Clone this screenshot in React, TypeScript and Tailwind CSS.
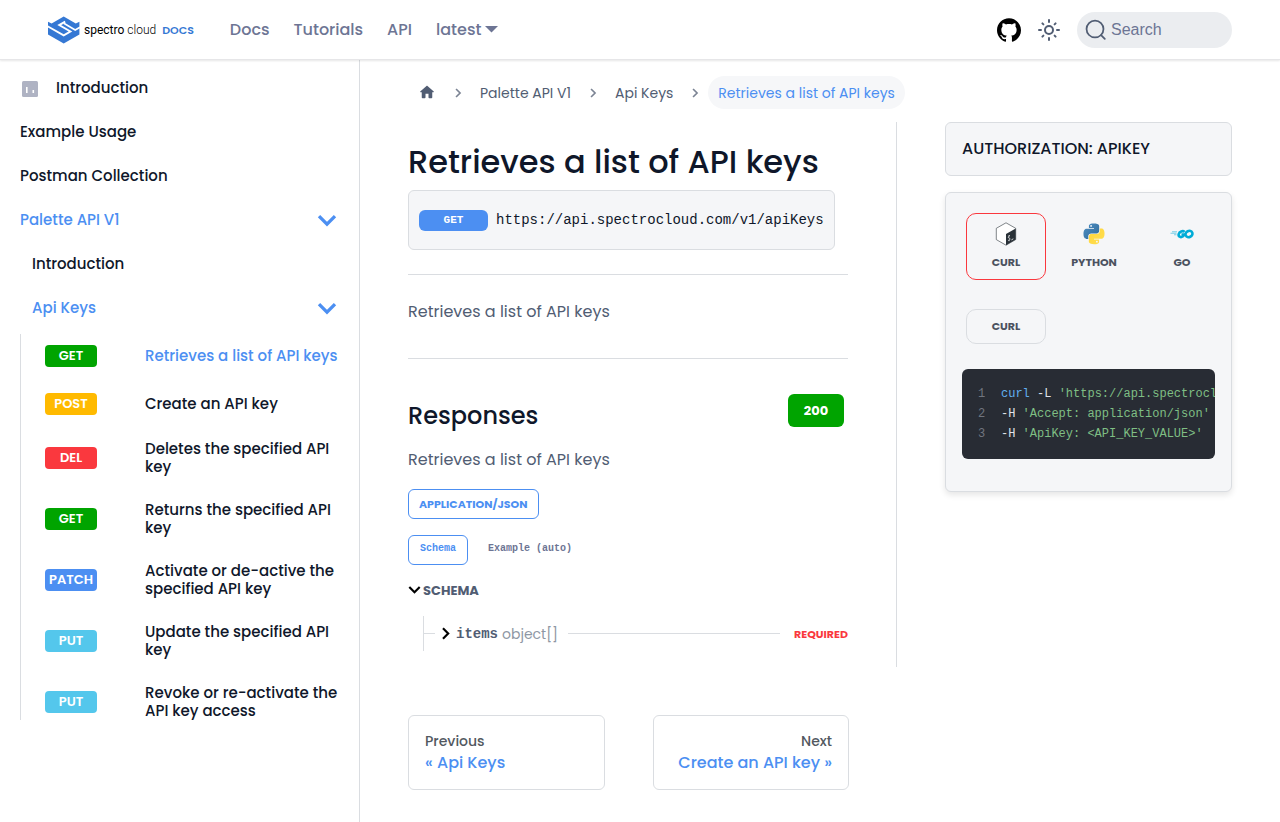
import React from "react";

const BORDER = "border-[#dadde1]";
const mono = "font-['Liberation_Mono',monospace]";

function Logo() {
  return (
    <a href="#home" className="flex items-center" aria-label="Spectro Cloud docs">
      <svg width="32" height="28" viewBox="0 0 32 28" aria-hidden="true">
        <path fill="#3578d4" d="M0 5.800 3.600 7.400 15.700.4 27.800 7.400 31.400 5.800V18.600L15.700 27.500 0 18.600z" />
        <path fill="none" stroke="#fff" strokeWidth="1.900" d="M-.5 10.200 15.700 19.300 22.400 15.500 11.200 9.100 17.200 5.600" />
        <path fill="none" stroke="#fff" strokeWidth="1.700" d="M32 11.200 27.200 14 15.800 7.300" />
      </svg>
      <span className="ml-1 whitespace-nowrap font-['Roboto',sans-serif] text-xs text-black">spectro <span className="font-light">cloud</span></span>
      <span className="ml-1.5 text-[11px] font-semibold leading-5 text-[#3578d4]">DOCS</span>
    </a>
  );
}

function Chevron({ size, stroke = 3, dir = "down" }: { size: number; stroke?: number; dir?: "down" | "right" }) {
  return (
    <svg width={size} height={size} viewBox="3 3 18 18" fill="none" stroke="currentColor" strokeWidth={stroke} className="shrink-0" aria-hidden="true">
      <path d={dir === "down" ? "M4.800 8.500 12 15.700l7.200-7.200" : "m8.500 4.800 7.200 7.200-7.200 7.200"} />
    </svg>
  );
}

function Header() {
  return (
    <header className="relative z-10 flex h-[60px] items-center border-b border-[#e6e6e8] bg-white px-12 shadow-[0_1px_2px_rgba(0,0,0,0.1)]">
      <Logo />
      <nav className="ml-9 flex items-center gap-6 text-base font-medium text-[#6d7594]">
        <a href="#docs">Docs</a>
        <a href="#tutorials">Tutorials</a>
        <a href="#api">API</a>
        <button className="flex items-center gap-1">
          latest
          <svg width="13" height="7" viewBox="0 0 13 7" aria-hidden="true"><path fill="currentColor" d="M0 0h13L6.500 6.500z" /></svg>
        </button>
      </nav>
      <div className="ml-auto flex items-center gap-4">
        <a href="#github" aria-label="GitHub">
          <svg width="24" height="24" viewBox="0 0 24 24" aria-hidden="true">
            <path d="M12 .297c-6.630 0-12 5.373-12 12 0 5.303 3.438 9.800 8.205 11.385.6.113.82-.258.82-.577 0-.285-.01-1.040-.015-2.040-3.338.724-4.042-1.610-4.042-1.610C4.422 18.070 3.633 17.700 3.633 17.700c-1.087-.744.084-.729.084-.729 1.205.084 1.838 1.236 1.838 1.236 1.070 1.835 2.809 1.305 3.495.998.108-.776.417-1.305.760-1.605-2.665-.3-5.466-1.332-5.466-5.930 0-1.310.465-2.380 1.235-3.220-.135-.303-.540-1.523.105-3.176 0 0 1.005-.322 3.300 1.230.960-.267 1.980-.399 3-.405 1.020.006 2.040.138 3 .405 2.280-1.552 3.285-1.230 3.285-1.230.645 1.653.240 2.873.120 3.176.765.840 1.230 1.910 1.230 3.220 0 4.610-2.805 5.625-5.475 5.920.420.360.810 1.096.810 2.220 0 1.606-.015 2.896-.015 3.286 0 .315.210.690.825.570C20.565 22.092 24 17.592 24 12.297c0-6.627-5.373-12-12-12" />
          </svg>
        </a>
        <button aria-label="Switch theme" className="text-[#515d73]">
          <svg width="24" height="24" viewBox="0 0 24 24" fill="none" stroke="currentColor" strokeWidth="2" strokeLinecap="round" aria-hidden="true">
            <circle cx="12" cy="12" r="4" />
            <path d="M12 2v2M12 20v2M2 12h2M20 12h2M5.400 5.400l1 1M17.600 17.600l1 1M5.400 18.600l1-1M17.600 6.400l1-1" />
          </svg>
        </button>
        <label className="flex h-9 w-[155px] items-center gap-1 rounded-full bg-[#ebedf0] px-2 text-[#515d73]">
          <svg width="22" height="22" viewBox="0 0 20 20" fill="none" stroke="currentColor" strokeWidth="1.600" strokeLinecap="round" className="shrink-0" aria-hidden="true">
            <path d="m14.400 14.400 3.600 3.600M16.800 9.100A7.700 7.700 0 1 1 1.400 9.100a7.700 7.700 0 0 1 15.400 0Z" />
          </svg>
          <input aria-label="Search" placeholder="Search" className="w-full min-w-0 bg-transparent font-['Liberation_Sans',sans-serif] text-base outline-none placeholder:text-[#6d7594]" />
        </label>
      </div>
    </header>
  );
}

const endpoints = [
  { method: "GET", color: "bg-[#00a400]", label: "Retrieves a list of API keys", active: true },
  { method: "POST", color: "bg-[#ffba00]", label: "Create an API key" },
  { method: "DEL", color: "bg-[#fa383e]", label: "Deletes the specified API key" },
  { method: "GET", color: "bg-[#00a400]", label: "Returns the specified API key" },
  { method: "PATCH", color: "bg-[#4c8ff2]", label: "Activate or de-active the specified API key" },
  { method: "PUT", color: "bg-[#54c7ec]", label: "Update the specified API key" },
  { method: "PUT", color: "bg-[#54c7ec]", label: "Revoke or re-activate the API key access" },
];

function Sidebar() {
  return (
    <aside className={`w-[360px] shrink-0 border-r px-5 pt-1.5 text-[15px] font-medium text-[#0f172a] ${BORDER}`}>
      <a href="#intro" className="flex h-11 items-center gap-4">
        <svg width="20" height="20" viewBox="0 0 20 20" aria-hidden="true">
          <rect x="2" y="3" width="16" height="16" rx="1.500" fill="#afb3c3" />
          <path d="M6.800 9v6M13.300 12v3" stroke="#fff" strokeWidth="1.600" />
        </svg>
        Introduction
      </a>
      <a href="#usage" className="flex h-11 items-center">Example Usage</a>
      <a href="#postman" className="flex h-11 items-center">Postman Collection</a>
      <button className="flex h-11 w-full items-center justify-between pr-0.5 text-[#4c8ff2]">Palette API V1<Chevron size={20} /></button>
      <a href="#api-intro" className="flex h-11 items-center pl-3">Introduction</a>
      <button className="flex h-11 w-full items-center justify-between pl-3 pr-0.5 text-[#4c8ff2]">Api Keys<Chevron size={20} /></button>
      <ul className={`mt-1 flex flex-col gap-[25px] border-l pl-6 pt-2.5 ${BORDER}`}>
        {endpoints.map((e) => (
          <li key={e.label}>
            <a href="#endpoint" className={`flex min-h-[23px] items-center ${e.active ? "text-[#4c8ff2]" : ""}`}>
              <span className={`flex h-[22px] w-[52px] shrink-0 items-center justify-center rounded text-[13px] font-semibold text-white ${e.color}`}>{e.method}</span>
              <span className="ml-12 w-[195px] shrink-0 leading-[18px]">{e.label}</span>
            </a>
          </li>
        ))}
      </ul>
    </aside>
  );
}

function Breadcrumbs() {
  const sep = <span className="text-[#7c8494]"><Chevron size={10} dir="right" /></span>;
  return (
    <nav aria-label="Breadcrumbs" className="flex h-[33px] items-center text-sm text-[#515d73]">
      <a href="#home" aria-label="Home" className="ml-2.5 mr-[17px]">
        <svg width="18" height="18" viewBox="0 0 24 24" aria-hidden="true"><path fill="currentColor" d="M10 18v-5h4v5c0 .55.45 1 1 1h3c.55 0 1-.45 1-1v-7h1.700c.46 0 .68-.57.33-.87L12.670 2.600c-.38-.34-.96-.34-1.340 0l-8.360 7.530c-.34.300-.13.870.33.870H5v7c0 .55.45 1 1 1h3c.55 0 1-.45 1-1z" /></svg>
      </a>
      {sep}
      <a href="#palette" className="mx-[17px]">Palette API V1</a>
      {sep}
      <a href="#keys" className="mx-[17px]">Api Keys</a>
      {sep}
      <span className="ml-2 flex h-[33px] items-center rounded-full bg-[#f6f7f9] px-2.5 text-[#4c8ff2]">Retrieves a list of API keys</span>
    </nav>
  );
}

function Article() {
  return (
    <article className="text-base leading-[26px] text-[#515d73]">
      <h1 className="pt-5 text-[32px] font-medium leading-10 text-[#0f172a]">Retrieves a list of API keys</h1>
      <div className={`mt-2 flex h-[60px] w-fit items-center gap-2 rounded-md border bg-[#f5f6f8] px-2.5 ${BORDER} ${mono}`}>
        <span className="flex h-[21px] w-[69px] items-center justify-center rounded-md bg-[#4c8ff2] text-[11px] font-bold text-white">GET</span>
        <code className={`text-sm text-[#0f172a] ${mono}`}>https://api.spectrocloud.com/v1/apiKeys</code>
      </div>
      <hr className={`mt-6 ${BORDER}`} />
      <p className="mt-6">Retrieves a list of API keys</p>
      <hr className={`mt-[33px] ${BORDER}`} />
      <div className="mt-[35px] flex items-start justify-between pr-1">
        <h2 className="pt-1.5 text-2xl font-medium leading-8 text-[#0f172a]">Responses</h2>
        <button className="h-[33px] w-14 rounded-md bg-[#00a400] text-[13px] font-bold text-white">200</button>
      </div>
      <p className="mt-[15px]">Retrieves a list of API keys</p>
      <button className="mt-4 flex h-[30px] items-center rounded-md border border-[#4c8ff2] px-2.5 text-[11px] font-bold text-[#4c8ff2]">APPLICATION/JSON</button>
      <div className={`mt-4 flex h-[30px] text-[10px] font-bold leading-4 ${mono}`}>
        <button className="flex rounded-md border border-[#4c8ff2] px-[11px] pt-[5px] text-[#4c8ff2]">Schema</button>
        <button className="ml-5 flex pt-1.5 text-[#6d7594]">Example (auto)</button>
      </div>
      <button className="mt-[13px] flex items-center gap-0.5 text-[13px] font-bold leading-[26px]">
        <span className="pb-1 text-black"><Chevron size={13} /></span>SCHEMA
      </button>
      <div className={`ml-[15px] mt-3 flex h-[35px] items-center border-l ${BORDER}`}>
        <span className={`w-[11px] border-t ${BORDER}`} />
        <button className="ml-1 flex items-center whitespace-nowrap text-sm">
          <span className="text-black"><Chevron size={13} dir="right" /></span>
          <strong className={`ml-1 ${mono}`}>items</strong>
          <span className="ml-1 text-[#8e97a4]">object[]</span>
        </button>
        <span className={`ml-2.5 mr-3.5 flex-1 border-t ${BORDER}`} />
        <span className="text-[11px] font-bold text-[#fa383e]">REQUIRED</span>
      </div>
    </article>
  );
}

function BashIcon() {
  return (
    <svg width="24" height="24" viewBox="0 0 24 24" aria-hidden="true">
      <path fill="#fff" stroke="#4b5157" strokeWidth=".7" d="M12 .8 21.700 6.300v11.300L12 23.200 2.300 17.600V6.300z" />
      <path fill="#293138" d="m12 12 9.700-5.600v11.200L12 23.200z" />
      <path fill="none" stroke="#fff" strokeWidth=".8" d="M16 13.900c-1.100-.2-2.200 1.200-1.500 1.900.6.600 1.800.2 1.500 1.300-.3.900-1.200 1.500-1.900 1.100M15.100 13v1M15.100 18.200v1M17.400 17.900l1.900-1.100" />
    </svg>
  );
}

function PythonIcon() {
  return (
    <svg width="24" height="24" viewBox="4 4 120 120" aria-hidden="true">
      <defs>
        <linearGradient id="python-blue" x1="0" y1="0" x2="1" y2="1"><stop stopColor="#4d8fc4" /><stop offset="1" stopColor="#306998" /></linearGradient>
        <linearGradient id="python-yellow" x1="0" y1="0" x2="1" y2="1"><stop stopColor="#ffd43b" /><stop offset="1" stopColor="#ffe052" /></linearGradient>
      </defs>
      <path fill="url(#python-blue)" d="M63.400 11C37 11 38.600 22.500 38.600 22.500v12H64V38H28.500S11.300 36 11.300 63.200c0 27.100 15 26.100 15 26.100h9V76.700s-.5-15 14.800-15h25.400s14.300.2 14.300-13.900V24.700S92 11 63.400 11zM49.500 19a4.600 4.600 0 1 1 0 9.200 4.600 4.600 0 0 1 0-9.200z" />
      <path fill="url(#python-yellow)" d="M64.600 115c26.400 0 24.800-11.500 24.800-11.500v-12H64V88h35.500s17.200 2 17.200-25.200c0-27.100-15-26.100-15-26.100h-9v12.600s.5 15-14.800 15H52.500s-14.300-.2-14.300 13.900v23.100S36 115 64.600 115zm13.900-8a4.600 4.600 0 1 1 0-9.200 4.600 4.600 0 0 1 0 9.200z" />
    </svg>
  );
}

function GoIcon() {
  return (
    <svg width="24" height="24" viewBox="0 0 24 24" fill="none" stroke="#00acd7" aria-hidden="true">
      <path strokeWidth="1.100" opacity=".5" d="M2 9.800h5M.5 11.300h6M4 12.800h2.500" />
      <path strokeWidth="2.600" d="M14.600 9.900c-1.800-1.600-5.200-.4-5.900 2.100-.6 2.600 2 3.800 4.100 2.500.8-.5 1.200-1.100 1.300-1.900h-2.600" />
      <ellipse cx="19" cy="12" rx="3.500" ry="3" strokeWidth="2.600" transform="rotate(-25 19 12)" />
    </svg>
  );
}

const languages = [
  { name: "CURL", icon: <BashIcon />, frame: "border-[#fa383e]" },
  { name: "PYTHON", icon: <PythonIcon />, frame: "border-transparent" },
  { name: "GO", icon: <GoIcon />, frame: "border-transparent" },
];

const code = [
  <><span className="text-[#61afef]">curl</span> -L <span className="text-[#7fbf84]">'https://api.spectrocloud.com/v1/apiKeys'</span></>,
  <>-H <span className="text-[#7fbf84]">'Accept: application/json'</span></>,
  <>-H <span className="text-[#7fbf84]">'ApiKey: &lt;API_KEY_VALUE&gt;'</span></>,
];

function RequestPanel() {
  return (
    <div className="flex min-w-0 flex-col gap-4">
      <button className={`flex h-[54px] items-center rounded-md border bg-[#f5f6f8] px-4 text-base font-medium text-[#0f172a] ${BORDER}`}>AUTHORIZATION: APIKEY</button>
      <section className={`rounded-md border bg-[#f5f6f8] px-4 pb-8 pt-5 shadow-[0_3px_6px_rgba(0,0,0,0.1)] ${BORDER}`}>
        <div className="flex gap-2 overflow-hidden pl-1 text-[11px] font-bold text-[#4b5260]">
          {languages.map((l) => (
            <button key={l.name} className={`flex h-[67px] w-20 shrink-0 flex-col items-center rounded-[10px] border pt-2 ${l.frame}`}>
              {l.icon}
              <span className="mt-2 leading-4">{l.name}</span>
            </button>
          ))}
        </div>
        <button className={`ml-1 mt-[29px] h-[35px] w-20 rounded-[10px] border text-[11px] font-bold text-[#4b5260] ${BORDER}`}>CURL</button>
        <pre className={`mt-[25px] h-[90px] overflow-x-auto overflow-y-hidden rounded-md bg-[#282c34] px-4 py-[15px] text-xs leading-5 text-[#dfe3ea] [scrollbar-width:none] ${mono}`}>
          {code.map((line, i) => (
            <div key={i} className="flex"><span className="w-[23px] shrink-0 text-[#70757f]">{i + 1}</span><code className={mono}>{line}</code></div>
          ))}
        </pre>
      </section>
    </div>
  );
}

export default function App() {
  return (
    <div className="flex min-h-screen flex-col bg-white font-['Poppins','Inter',sans-serif]">
      <Header />
      <div className="flex flex-1">
        <Sidebar />
        <main className="min-w-0 flex-1 px-12 pt-4">
          <Breadcrumbs />
          <div className="mt-[13px] grid grid-cols-[minmax(0,489fr)_minmax(0,335fr)]">
            <div className={`min-h-[545px] border-r pr-12 ${BORDER}`}><Article /></div>
            <div className="pl-12"><RequestPanel /></div>
            <nav aria-label="Pages" className="mt-12 grid grid-cols-2 gap-12 pr-12 text-base font-medium leading-[22px] text-[#4c8ff2]">
              <a href="#prev" className={`h-[75px] rounded-md border px-4 py-3.5 ${BORDER}`}>
                <div className="text-sm leading-[22px] text-[#525860]">Previous</div>« Api Keys
              </a>
              <a href="#next" className={`h-[75px] whitespace-nowrap rounded-md border px-4 py-3.5 text-right ${BORDER}`}>
                <div className="text-sm leading-[22px] text-[#525860]">Next</div>Create an API key »
              </a>
            </nav>
          </div>
        </main>
      </div>
    </div>
  );
}
